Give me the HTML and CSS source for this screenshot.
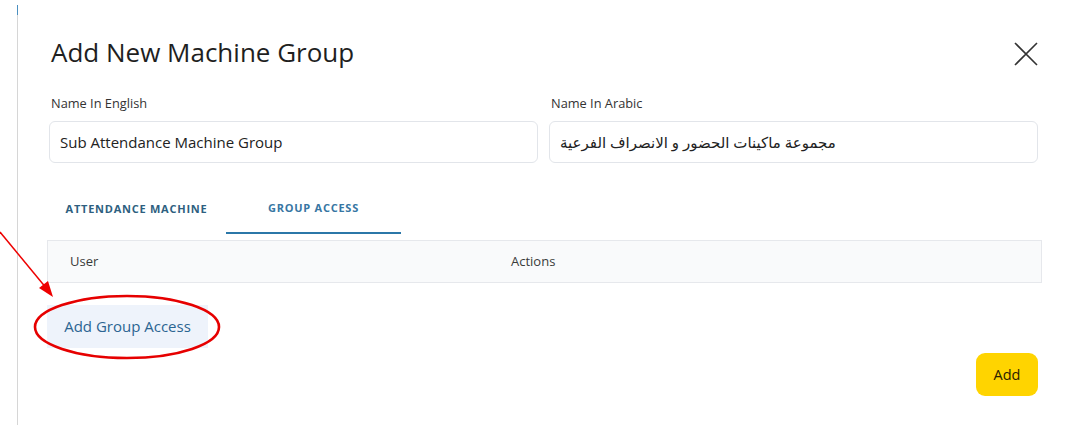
FILE: index.html
```html
<!DOCTYPE html>
<html lang="en">
<head>
<meta charset="utf-8">
<title>Add New Machine Group</title>
<link rel="stylesheet" href="styles.css">
</head>
<body>
<div class="page">
  <div class="rule"></div>
  <div class="modal">
    <div class="modal-head">
      <h1 class="title">Add New Machine Group</h1>
      <button class="close" aria-label="Close">
        <svg width="24" height="24" viewBox="0 0 24 24"><path d="M1 1L23 23M23 1L1 23" stroke="#333" stroke-width="1.6" fill="none"/></svg>
      </button>
    </div>
    <div class="fields">
      <div class="field">
        <label class="label">Name In English</label>
        <div class="input">Sub Attendance Machine Group</div>
      </div>
      <div class="field">
        <label class="label">Name In Arabic</label>
        <div class="input"><span class="ar" dir="rtl">مجموعة ماكينات الحضور و الانصراف الفرعية</span></div>
      </div>
    </div>
    <div class="tabs">
      <div class="tab">ATTENDANCE MACHINE</div>
      <div class="tab active">GROUP ACCESS</div>
    </div>
    <div class="table-head">
      <div class="col-user">User</div>
      <div class="col-actions">Actions</div>
    </div>
    <div class="add-row">
      <button class="add-access">Add Group Access</button>
    </div>
    <div class="footer">
      <button class="add-btn">Add</button>
    </div>
  </div>
  <svg class="annot" width="1074" height="425" viewBox="0 0 1074 425">
    <line x1="0" y1="232" x2="47" y2="289" stroke="#ee0000" stroke-width="1.5"/>
    <polygon points="53,297 39,288 48,281" fill="#ee0000"/>
    <ellipse cx="127" cy="327" rx="92" ry="31" fill="none" stroke="#e60000" stroke-width="2.6"/>
  </svg>
</div>
</body>
</html>
```
FILE: styles.css
```css
* { box-sizing: border-box; }
html, body { margin: 0; padding: 0; background: #fff; }
body {
  font-family: "Open Sans", "Noto Sans", "Liberation Sans", sans-serif;
  color: #222;
  width: 1074px;
  height: 425px;
  overflow: hidden;
}
.page {
  position: relative;
  width: 1074px;
  height: 425px;
  display: flex;
}
.rule {
  width: 1px;
  margin-left: 17px;
  margin-top: 5px;
  background: linear-gradient(#4a8fc0 0, #4a8fc0 10px, #d6d6d6 10px);
  flex: none;
}
.modal {
  flex: 1;
  padding: 0 32px 0 29px;
  display: flex;
  flex-direction: column;
}
.modal-head {
  display: flex;
  align-items: center;
  justify-content: space-between;
  padding-top: 32px;
  height: 72px;
}
.title {
  margin: 0 0 0 4px;
  font-size: 26px;
  font-weight: 500;
  color: #1f1f1f;
  letter-spacing: 0;
}
.close {
  border: 0;
  background: none;
  padding: 0;
  margin-right: 4px;
  margin-top: 4px;
  width: 24px;
  height: 24px;
  display: flex;
}
.fields {
  display: flex;
  gap: 11px;
  margin-top: 22px;
  padding-left: 2px;
  padding-right: 4px;
}
.field { flex: 1; display: flex; flex-direction: column; }
.label {
  font-size: 12.8px;
  color: #333;
  margin-left: 2px;
  height: 17px;
  line-height: 17px;
  padding-top: 1px;
}
.input {
  margin-top: 10px;
  height: 42px;
  border: 1px solid #e2e5ea;
  border-radius: 6px;
  padding: 0 10px;
  font-size: 15px;
  color: #222;
  display: flex;
  align-items: center;
}
.ar { font-family: "Noto Sans", "DejaVu Sans", sans-serif; font-size: 15px; }
.tabs {
  display: flex;
  margin-top: 25px;
  height: 46px;
}
.tab {
  font-size: 11px;
  font-weight: 700;
  letter-spacing: 0.75px;
  color: #2e5f80;
  display: flex;
  align-items: center;
  justify-content: center;
  padding-bottom: 6px;
}
.tab:first-child { width: 179px; }
.tab.active {
  width: 175px;
  border-bottom: 2px solid #2b77a8;
  color: #3776a3;
}
.table-head {
  margin-top: 6px;
  height: 43px;
  background: #f9fafb;
  border: 1px solid #e6e8ec;
  display: flex;
  align-items: center;
  font-size: 13px;
  color: #3a3a3a;
  padding-bottom: 2px;
}
.col-user { width: 463px; padding-left: 22px; }
.col-actions { flex: 1; }
.add-row { margin-top: 22px; }
.add-access {
  border: 0;
  background: #eef3fb;
  color: #2b6592;
  font-family: inherit;
  font-size: 15px;
  height: 43px;
  width: 161px;
  padding: 0 0 2px 0;
  margin-left: 0;
}
.footer {
  display: flex;
  justify-content: flex-end;
  padding-right: 4px;
  margin-top: 5px;
}
.add-btn {
  border: 0;
  background: #ffd400;
  color: #2a2000;
  font-family: inherit;
  font-size: 14.5px;
  font-weight: 500;
  width: 62px;
  height: 43px;
  border-radius: 9px;
  padding-bottom: 2px;
}
.annot {
  position: absolute;
  left: 0;
  top: 0;
  pointer-events: none;
}
```
